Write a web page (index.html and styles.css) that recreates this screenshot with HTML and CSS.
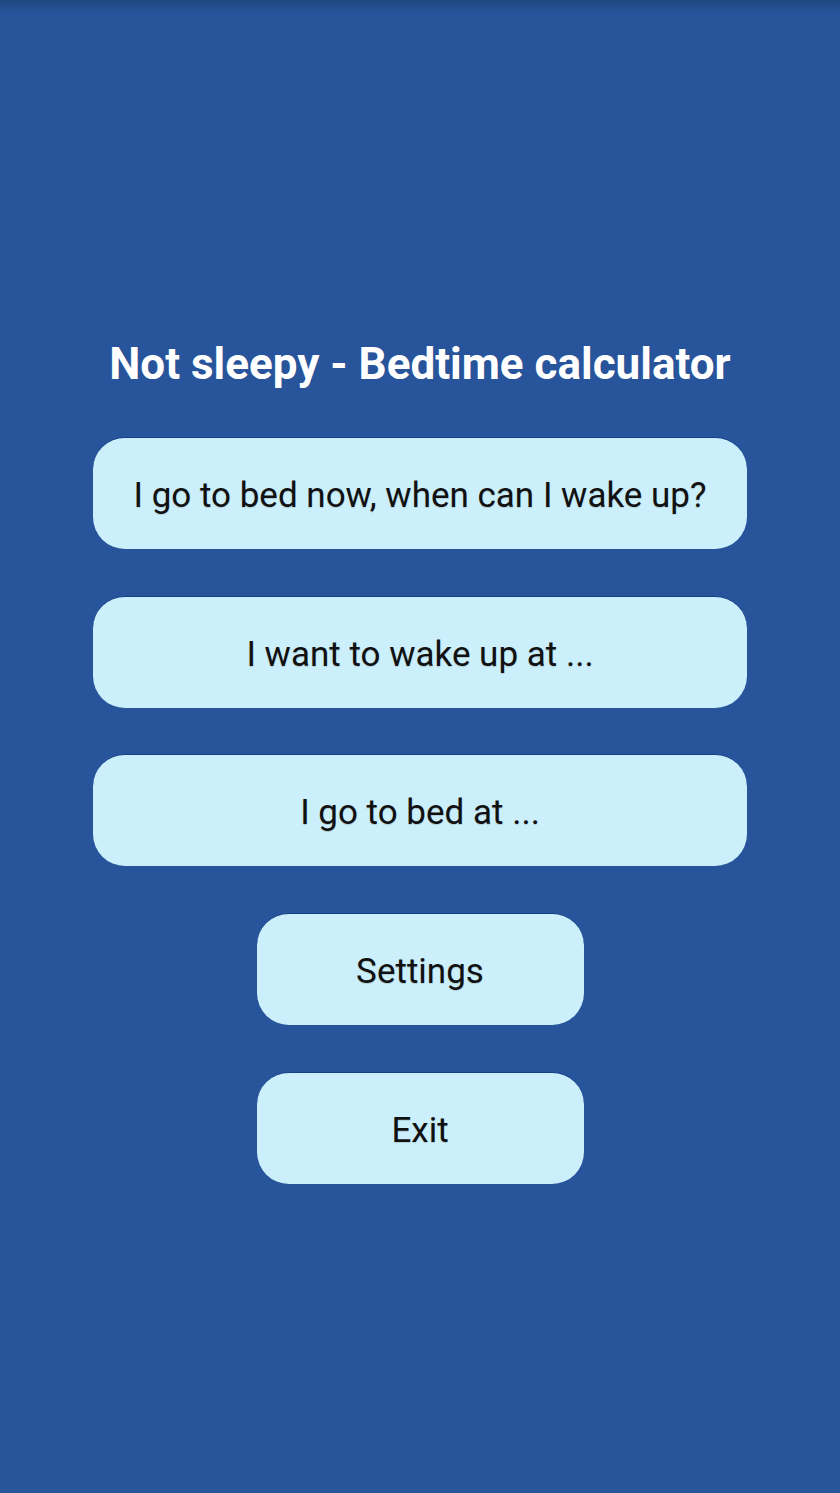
FILE: index.html
```html
<!DOCTYPE html>
<html lang="en">
<head>
    <meta charset="UTF-8">
    <meta name="viewport" content="width=device-width, initial-scale=1.0">
    <title>Not sleepy - Bedtime calculator</title>
    <link rel="stylesheet" href="styles.css">
</head>
<body>
    <div class="container">
        <h1>Not sleepy - Bedtime calculator</h1>
        <div class="menu">
            <button class="menu-btn wide" type="button">I go to bed now, when can I wake up?</button>
            <button class="menu-btn wide" type="button">I want to wake up at ...</button>
            <button class="menu-btn wide" type="button">I go to bed at ...</button>
            <button class="menu-btn narrow" type="button">Settings</button>
            <button class="menu-btn narrow" type="button">Exit</button>
        </div>
    </div>
</body>
</html>
```

FILE: styles.css
```css
html, body {
    margin: 0;
    height: 100%;
}

body {
    background: linear-gradient(#1f4880 0, #27549a 12px) #27549a;
    font-family: Roboto, "Noto Sans", sans-serif;
}

.container {
    padding-top: 338px;
    display: flex;
    flex-direction: column;
    align-items: center;
}

h1 {
    margin: 0 0 47px;
    color: #fff;
    font-size: 44px;
    line-height: 52px;
    font-weight: bold;
    text-align: center;
}

.menu {
    display: flex;
    flex-direction: column;
    align-items: center;
    gap: 46.7px;
}

.menu-btn {
    height: 112px;
    padding: 4px 0 0;
    background-color: #cbeffb;
    color: #111;
    border: none;
    border-top: 1px solid #123f86;
    border-radius: 32px;
    font-family: inherit;
    font-size: 35px;
    text-align: center;
    cursor: pointer;
    text-shadow: 0 1px 1px rgba(0, 0, 0, 0.15);
}

.wide {
    width: 654px;
}

.narrow {
    width: 327px;
}
```
